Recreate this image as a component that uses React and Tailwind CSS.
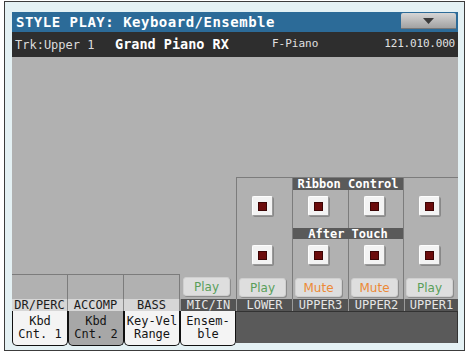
const mono = "font-['DejaVu_Sans_Mono',monospace]";
const sans = "font-['DejaVu_Sans',sans-serif]";

function Check() {
  return (
    <div className="w-[21px] h-[20px] bg-[#f3f3f3] rounded-[2px] border border-t-[#fdfdfd] border-l-[#fdfdfd] border-b-[#9a9a9a] border-r-[#9a9a9a] shadow-[1px_1px_0_#888] flex items-center justify-center">
      <div className="w-[9px] h-[9px] bg-[#6c0c0c] border border-[#3c0404]" />
    </div>
  );
}

function Btn({ label, mute }) {
  return (
    <div
      className={`w-[47px] h-[19px] rounded-[3px] bg-[#dedede] border border-[#cfcfcf] shadow-[1px_1px_0_#8c8c8c] flex items-center justify-center text-[12px] leading-none ${sans} ${
        mute ? "text-[#ec8936]" : "text-[#5a9e5a]"
      }`}
    >
      {label}
    </div>
  );
}

function SideCol({ label, mute, w }) {
  return (
    <div className={`${w} flex flex-col`}>
      <div className="h-[12px]" />
      <div className="h-[38px] pl-[2px] pt-[6px]">
        <div className="w-[47px] flex justify-center">
          <Check />
        </div>
      </div>
      <div className="h-[11px]" />
      <div className="h-[35px] pl-[2px] pt-[6px]">
        <div className="w-[47px] flex justify-center">
          <Check />
        </div>
      </div>
      <div className="h-[25px] pl-[2px] pt-[4px]">
        <Btn label={label} mute={mute} />
      </div>
    </div>
  );
}

function PairRow({ h }) {
  return (
    <div className={`${h} flex`}>
      <div className="w-[55px] pl-[2px] pt-[6px]">
        <div className="w-[47px] flex justify-center">
          <Check />
        </div>
      </div>
      <div className="flex-1 border-l border-[#7c7c7c] pl-[2px] pt-[6px]">
        <div className="w-[47px] flex justify-center">
          <Check />
        </div>
      </div>
    </div>
  );
}

function Header({ text, h }) {
  return (
    <div
      className={`${h} bg-[#5a5a5a] text-white font-bold text-[12px] leading-none flex items-center justify-center ${mono}`}
    >
      {text}
    </div>
  );
}

function Tab({ l1, l2, sel }) {
  return (
    <div
      className={`w-[56px] h-[35px] border border-t-0 border-[#111] rounded-b-[5px] flex flex-col items-center justify-center text-[12px] leading-[13px] text-[#151515] ${mono} ${
        sel ? "bg-[#a7a7a7]" : "bg-[#f4f4f4]"
      }`}
    >
      <span>{l1}</span>
      <span>{l2}</span>
    </div>
  );
}

export default function App() {
  const labels = [
    ["DR/PERC", true],
    ["ACCOMP", true],
    ["BASS", true],
    ["MIC/IN", false],
    ["LOWER", false],
    ["UPPER3", false],
    ["UPPER2", false],
    ["UPPER1", false],
  ];
  return (
    <div className="w-[467px] h-[354px] bg-white overflow-hidden">
      <div className="ml-[4px] mt-[1px] w-[461px] h-[350px] border border-[#3c3c3c] bg-[#e4f1f4] pl-[7px] pt-[10px]">
        <div className="w-[446px] h-[334px] flex flex-col">
          {/* Title bar */}
          <div className="h-[20px] bg-[#2c6b98] flex items-start justify-between pl-[4px] pr-[2px]">
            <span
              className={`text-white font-bold text-[14px] leading-[20px] tracking-[0.5px] ${mono}`}
            >
              STYLE PLAY: Keyboard/Ensemble
            </span>
            <div className="mt-[1px] w-[55px] h-[16px] rounded-t-[2px] bg-linear-to-b from-[#d6d6d6] to-[#a2a2a2] border-b border-[#777] flex items-center justify-center">
              <svg width="11" height="6" viewBox="0 0 11 6">
                <polygon points="0,0 11,0 5.5,6" fill="#3a3a3a" />
              </svg>
            </div>
          </div>
          {/* Track row */}
          <div className={`h-[25px] bg-[#2e2e2e] flex items-center ${mono}`}>
            <span className="w-[103px] pl-[3px] text-[12px] text-[#dcdcdc]">
              Trk:Upper 1
            </span>
            <span className="w-[157px] text-[13.5px] font-bold text-white">
              Grand Piano RX
            </span>
            <span className="flex-1 text-[11px] text-[#e0e0e0]">F-Piano</span>
            <span className="pr-[3px] text-[11px] tracking-[-0.2px] text-[#e0e0e0]">
              121.010.000
            </span>
          </div>
          {/* Main gray area */}
          <div className="flex-1 bg-[#b1b1b1] flex items-end">
            <div className="w-[224px] h-[25px] flex">
              <div className="w-[56px] border-t border-r border-[#7c7c7c]" />
              <div className="w-[56px] border-t border-r border-[#7c7c7c]" />
              <div className="w-[56px] border-t border-r border-[#7c7c7c]" />
              <div className="w-[56px] pl-[3px] pt-[3px]">
                <Btn label="Play" />
              </div>
            </div>
            <div className="w-[222px] h-[122px] border-t border-l border-[#7c7c7c] flex">
              <SideCol label="Play" w="w-[55px]" />
              <div className="w-[112px] border-l border-r border-[#7c7c7c] flex flex-col">
                <Header text="Ribbon Control" h="h-[12px]" />
                <PairRow h="h-[38px]" />
                <Header text="After Touch" h="h-[11px]" />
                <PairRow h="h-[35px]" />
                <div className="h-[25px] flex">
                  <div className="w-[55px] pl-[2px] pt-[4px]">
                    <Btn label="Mute" mute />
                  </div>
                  <div className="flex-1 border-l border-[#7c7c7c] pl-[2px] pt-[4px]">
                    <Btn label="Mute" mute />
                  </div>
                </div>
              </div>
              <SideCol label="Play" w="flex-1" />
            </div>
          </div>
          {/* Labels row */}
          <div className={`h-[12px] flex text-[12px] leading-[12px] ${mono}`}>
            {labels.map(([t, light], i) => (
              <div
                key={t}
                className={`${i === 7 ? "flex-1" : "w-[56px]"} flex items-center justify-center ${
                  light
                    ? "bg-[#d6d6d6] text-[#1c1c1c] border-r border-[#8a8a8a]"
                    : "bg-[#545454] text-[#e6e6e6] border-l border-[#9a9a9a]"
                }`}
              >
                {t}
              </div>
            ))}
          </div>
          {/* Tabs row */}
          <div className="h-[35px] flex items-start">
            <Tab l1="Kbd" l2="Cnt. 1" />
            <Tab l1="Kbd" l2="Cnt. 2" sel />
            <Tab l1="Key-Vel" l2="Range" />
            <Tab l1="Ensem-" l2="ble" />
            <div className="flex-1 h-[32px] bg-[#5a5a5a] border-t border-r border-[#333]" />
          </div>
        </div>
      </div>
    </div>
  );
}
